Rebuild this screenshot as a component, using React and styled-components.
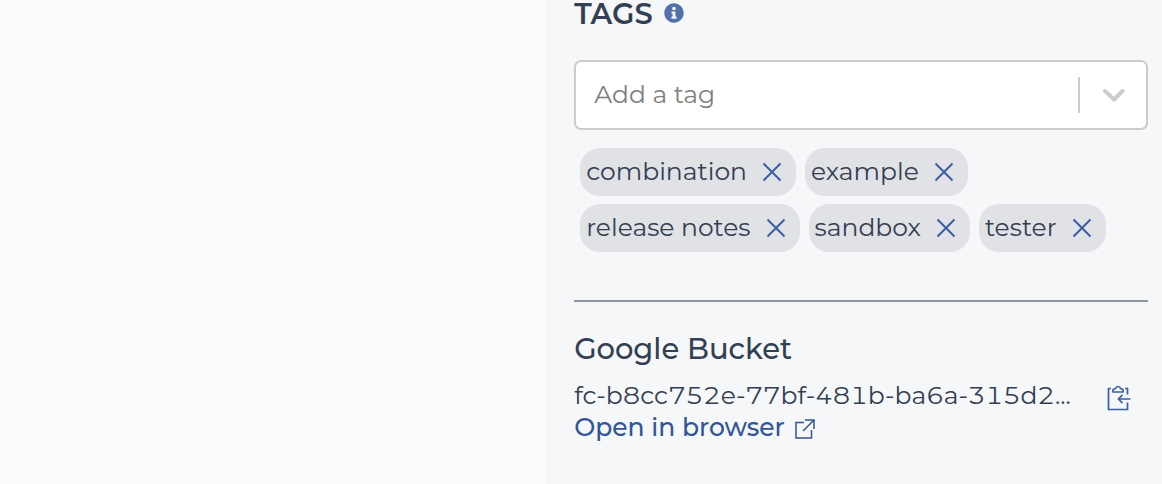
import React, { useState } from 'react'
import styled, { createGlobalStyle } from 'styled-components'

const GlobalStyle = createGlobalStyle`
  * {
    box-sizing: border-box;
  }
  body {
    margin: 0;
    background: #fafbfd;
    color: #333f52;
    font-family: Montserrat, Inter, "Open Sans", sans-serif;
    font-size: 25px;
  }
  button {
    display: flex;
    align-items: center;
    padding: 0;
    border: 0;
    background: none;
    cursor: pointer;
  }
  svg {
    display: block;
    flex: none;
  }
`

const Page = styled.div`
  display: grid;
  grid-template-columns: minmax(0, 47fr) minmax(0, 53fr);
  min-height: 100vh;
`

const Main = styled.main`
  background: #fafbfd;
`

const Sidebar = styled.aside`
  padding: 0 14px 40px 28px;
  background: #f5f7f9;
`

const TagsTitle = styled.h2`
  display: flex;
  align-items: center;
  gap: 11px;
  margin: 0 0 32px;
  font-size: 29px;
  font-weight: 600;
  line-height: 28px;
`

const InfoButton = styled.button`
  height: 26px;
  align-self: flex-start;
  color: #5271ab;
`

const SelectBox = styled.div`
  display: flex;
  align-items: center;
  height: 70px;
  border: 2px solid #ccc;
  border-radius: 7px;
  background: #fff;
`

const TagInput = styled.input`
  flex: 1;
  min-width: 0;
  padding: 0 18px 2px;
  border: 0;
  outline: 0;
  background: none;
  color: #333f52;
  font: inherit;
  &::placeholder {
    color: #808080;
    opacity: 1;
  }
`

const Separator = styled.span`
  width: 2px;
  height: 36px;
  background: #ccc;
`

const SelectArrow = styled.button`
  justify-content: center;
  width: 66px;
  height: 100%;
  color: #ccc;
`

const TagList = styled.ul`
  display: flex;
  flex-wrap: wrap;
  gap: 8px 9px;
  margin: 18px 0 48px;
  padding: 0 6px;
  list-style: none;
`

const Tag = styled.li`
  display: flex;
  align-items: center;
  gap: 15px;
  height: 48px;
  padding: 0 14px 0 6px;
  border-radius: 20px;
  background: #e1e2e6;
`

const TagText = styled.span`
  padding-bottom: 2px;
  line-height: 44px;
`

const RemoveButton = styled.button`
  color: #3a5fa5;
`

const Divider = styled.hr`
  height: 2px;
  margin: 0;
  border: 0;
  background: #8e95a5;
`

const BucketTitle = styled.h3`
  margin: 31px 0 14px;
  font-size: 29px;
  font-weight: 500;
  line-height: 32px;
`

const BucketRow = styled.div`
  display: flex;
  align-items: flex-end;
  justify-content: space-between;
  padding-right: 17px;
  line-height: 32px;
`

const BucketName = styled.span`
  font-variant-numeric: tabular-nums;
  white-space: nowrap;
`

const CopyButton = styled.button`
  color: #3a5fa5;
`

const BrowserLink = styled.a`
  display: inline-flex;
  align-items: center;
  gap: 10px;
  color: #305698;
  font-weight: 500;
  line-height: 32px;
  text-decoration: none;
`

const InfoIcon = () => (
  <svg width="20" height="20" viewBox="0 0 512 512" fill="currentColor" aria-hidden="true">
    <path d="M256 8C119 8 8 119 8 256s111 248 248 248 248-111 248-248S393 8 256 8zm0 90c26 0 46 19 46 44s-20 44-46 44-46-19-46-44 20-44 46-44zm66 290c0 7-5 12-12 12H202c-7 0-12-5-12-12v-30c0-7 5-12 12-12h18v-76h-18c-7 0-12-5-12-12v-30c0-7 5-12 12-12h78c7 0 12 5 12 12v118h18c7 0 12 5 12 12v30z" />
  </svg>
)

const ArrowIcon = () => (
  <svg width="24" height="16" viewBox="0 0 24 16" fill="none" stroke="currentColor" strokeWidth="4" strokeLinecap="round" strokeLinejoin="round" aria-hidden="true">
    <path d="M4 4 13 12.500l8.500-8.500" />
  </svg>
)

const CloseIcon = () => (
  <svg width="20" height="20" viewBox="0 0 20 20" fill="none" stroke="currentColor" strokeWidth="2" aria-hidden="true">
    <path d="M1.500 1.500 18.500 18.500M18.500 1.500 1.500 18.500" />
  </svg>
)

const ClipboardIcon = () => (
  <svg width="24" height="26" viewBox="0 0 24 26" fill="none" stroke="currentColor" strokeWidth="1.700" strokeLinejoin="round" aria-hidden="true">
    <path d="M4 3.500H1.500V24.500H20.500V17.500M18 3.500H20.500V9.500" />
    <path d="M6 7V4.500L8.500 3.500Q9 1.500 11 1.500T13.500 3.500L16 4.500V7Z" />
    <path d="M23.500 14H11.500M15.500 9.800 11.300 14l4.200 4.200" />
  </svg>
)

const PopOutIcon = () => (
  <svg width="20" height="24" viewBox="0 -4 20 24" fill="none" stroke="currentColor" strokeWidth="1.500" aria-hidden="true">
    <path d="M9 3.500H1V19H16.500V11" />
    <path d="M10 1H19V10M19 1 8 12" />
  </svg>
)

const App = () => {
  const [tags, setTags] = useState(['combination', 'example', 'release notes', 'sandbox', 'tester'])

  return (
    <Page>
      <GlobalStyle />
      <Main />
      <Sidebar>
        <TagsTitle>
          TAGS
          <InfoButton type="button" aria-label="About tags"><InfoIcon /></InfoButton>
        </TagsTitle>
        <SelectBox>
          <TagInput type="text" placeholder="Add a tag" aria-label="Add a tag" />
          <Separator />
          <SelectArrow type="button" aria-label="Show tags"><ArrowIcon /></SelectArrow>
        </SelectBox>
        <TagList>
          {tags.map(tag => (
            <Tag key={tag}>
              <TagText>{tag}</TagText>
              <RemoveButton
                type="button"
                aria-label={`Remove ${tag}`}
                onClick={() => setTags(tags.filter(t => t !== tag))}
              >
                <CloseIcon />
              </RemoveButton>
            </Tag>
          ))}
        </TagList>
        <Divider />
        <BucketTitle>Google Bucket</BucketTitle>
        <BucketRow>
          <BucketName>fc-b8cc752e-77bf-481b-ba6a-315d2...</BucketName>
          <CopyButton type="button" aria-label="Copy bucket name"><ClipboardIcon /></CopyButton>
        </BucketRow>
        <BrowserLink href="#bucket">
          Open in browser
          <PopOutIcon />
        </BrowserLink>
      </Sidebar>
    </Page>
  )
}

export default App
